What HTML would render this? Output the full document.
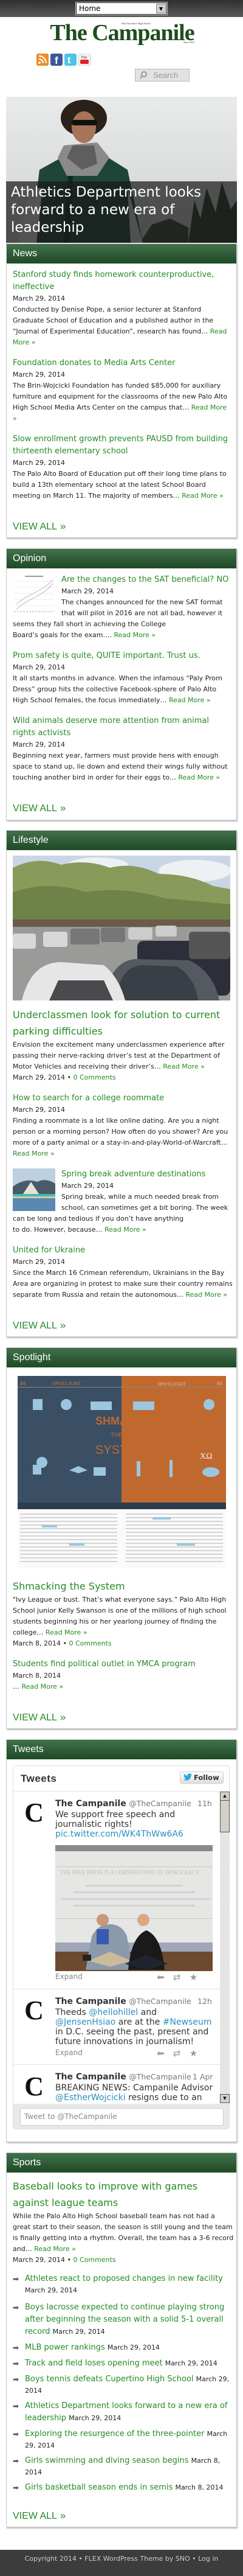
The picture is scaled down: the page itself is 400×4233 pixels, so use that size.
<!DOCTYPE html>
<html><head><meta charset="utf-8">
<style>
*{margin:0;padding:0;box-sizing:border-box}
body{width:400px;height:4233px;position:relative;background:#fff;font-family:"DejaVu Sans",sans-serif;overflow:hidden}
.abs{position:absolute}
.a{position:absolute;left:21px;white-space:nowrap;font-family:"DejaVu Sans",sans-serif}
.t{font-size:13px;line-height:20px;color:#268a26}
.bt{font-size:16px;line-height:27px;color:#268a26}
.l{font-size:11px;line-height:18px;color:#222}
.g{color:#268a26}
.box{position:absolute;left:10px;width:380px;border:1px solid #c8c8c8;background:#fff;box-shadow:1px 2px 2px rgba(0,0,0,.25)}
.hd{position:absolute;left:0;top:0;width:378px;height:32px;background:linear-gradient(#42714b,#1e4a26);color:#fff;font:16px/32px "Liberation Sans",sans-serif;padding-left:10px}
.va{position:absolute;left:21px;font:16px/24px "Liberation Sans",sans-serif;color:#268a26;white-space:nowrap}
.va b{font-weight:normal;font-size:17px;margin-left:5px}
.thumb{float:left;width:70px;height:70px;margin-right:10px}
.ar{position:absolute;left:21px;width:13px;height:20px;color:#555;font-size:12px;line-height:20px}
.li{position:absolute;left:41px;white-space:nowrap}
.li .t{display:block}
.li .l{display:block}
.dt{font-size:11px;color:#222}
.tw{font-family:"DejaVu Sans",sans-serif;white-space:nowrap;position:absolute;left:91px}
.tn{font-size:14px;line-height:20px;color:#333}
.tn b{font-weight:bold}
.tn span{font-size:12.5px;color:#777;font-weight:normal}
.tt{font-size:14px;line-height:16px;color:#333}
.tt a,.lk{color:#2a8fbd}
.ex{font-size:12px;color:#888}
.av{position:absolute;left:36px;width:40px;height:47px;font:bold 44px/47px "Liberation Serif",serif;color:#111;text-align:center}
</style></head><body>

<div class="abs" style="left:0;top:0;width:400px;height:28px;background:linear-gradient(#2f2f2f,#5a5a5a)"></div>
<div class="abs" style="left:125px;top:4px;width:150px;height:20px;background:#fff;border:1px solid #222;outline:1px solid #ccc"></div>
<div class="abs" style="left:130px;top:5px;font:12px/18px 'DejaVu Sans',sans-serif;color:#000">Home</div>
<div class="abs" style="left:257px;top:6px;width:16px;height:16px;background:#d4d0c8;border:1px solid #888;font-size:8px;line-height:16px;text-align:center">▼</div>

<div class="abs" style="left:80px;top:28px;width:242px;text-align:center;font:bold 38px/52px 'Liberation Serif',serif;color:#1e4d1e;white-space:nowrap;letter-spacing:-1px">The Campanile</div>
<div class="abs" style="left:200px;top:36px;font:4px/6px 'Liberation Serif',serif;color:#333;white-space:nowrap">Palo Alto Senior High School</div>
<div class="abs" style="left:302px;top:67px;font:4px/6px 'Liberation Serif',serif;color:#333">Since 1918</div>

<svg class="abs" style="left:60px;top:88px" width="90" height="20" viewBox="0 0 90 20">
<rect x="0" y="0" width="20" height="20" rx="3" fill="#f08a24"/><circle cx="5" cy="15" r="2" fill="#fff"/><path d="M4 9a7 7 0 0 1 7 7M4 4a12 12 0 0 1 12 12" stroke="#fff" stroke-width="2.2" fill="none"/>
<rect x="23" y="0" width="20" height="20" rx="3" fill="#3b5998"/><text x="30" y="17" font-family="Liberation Sans" font-weight="bold" font-size="17" fill="#fff">f</text>
<rect x="46" y="0" width="20" height="20" rx="3" fill="#4fc3e8"/><text x="51" y="16" font-family="Liberation Sans" font-weight="bold" font-size="16" fill="#fff">t</text>
<rect x="69" y="0" width="20" height="20" rx="3" fill="#f4f4f4" stroke="#ccc"/><text x="73" y="8" font-family="Liberation Sans" font-size="6" fill="#333">You</text><rect x="72" y="10" width="14" height="7" rx="2" fill="#d22"/>
</svg>

<div class="abs" style="left:222px;top:113px;width:90px;height:21px;background:#e2e2e2;border:1px solid #bbb"></div>
<svg class="abs" style="left:230px;top:117px" width="12" height="13"><circle cx="7" cy="5" r="4" stroke="#999" stroke-width="2" fill="none"/><path d="M4 8l-3 4" stroke="#999" stroke-width="2"/></svg>
<div class="abs" style="left:252px;top:114px;font:13px/19px 'Liberation Sans',sans-serif;color:#999">Search</div>

<svg class="abs" style="left:10px;top:159px" width="380" height="240" viewBox="0 0 380 240">
<defs><linearGradient id="sky" x1="0" y1="0" x2="0" y2="1"><stop offset="0" stop-color="#e9ebea"/><stop offset="1" stop-color="#cfd2d1"/></linearGradient></defs>
<rect width="380" height="240" fill="url(#sky)"/>
<path d="M300 240 L310 170 L320 200 L330 150 L345 190 L355 140 L370 185 L380 170 L380 240Z" fill="#2a3a2a"/>
<path d="M220 240 L240 210 L270 200 L300 215 L300 240Z" fill="#3a4a38"/>
<path d="M40 240 L55 120 L100 95 L130 85 L160 95 L200 120 L225 240Z" fill="#1f4536"/>
<path d="M85 100 L95 80 L150 75 L170 100 L150 130 L100 130Z" fill="#8a8a8a"/>
<path d="M100 100 L110 80 L145 80 L150 110 L125 120Z" fill="#5e5e5e"/>
<path d="M95 240 L102 130 L110 130 L105 240Z" fill="#112a20"/>
<ellipse cx="128" cy="35" rx="38" ry="30" fill="#2c2118"/>
<ellipse cx="128" cy="50" rx="20" ry="26" fill="#a87458"/>
<rect x="108" y="38" width="42" height="9" rx="4" fill="#111"/>
<path d="M40 150 L20 240 L50 240 L60 150Z" fill="#e8e8e8"/>
<path d="M200 150 L225 240 L205 240Z" fill="#dddddd"/>
</svg>
<div class="abs" style="left:10px;top:298px;width:380px;height:101px;background:rgba(25,25,25,.72)"></div>
<div class="abs" style="left:18px;top:302px;font:23px/29px 'DejaVu Sans',sans-serif;color:#fff;white-space:nowrap">Athletics Department looks<br>forward to a new era of<br>leadership</div>

<div class="box" style="top:400px;height:484px"><div class="hd">News</div></div>
<div class="a" style="top:442px"><div class="t">Stanford study finds homework counterproductive,</div><div class="t">ineffective</div><div class="l">March 29, 2014</div><div class="l">Conducted by Denise Pope, a senior lecturer at Stanford</div><div class="l">Graduate School of Education and a published author in the</div><div class="l">“Journal of Experimental Education”, research has found…  <span class="g">Read</span></div><div class="l g">More »</div></div>
<div class="a" style="top:587px"><div class="t">Foundation donates to Media Arts Center</div><div class="l">March 29, 2014</div><div class="l">The Brin-Wojcicki Foundation has funded $85,000 for auxiliary</div><div class="l">furniture and equipment for the classrooms of the new Palo Alto</div><div class="l">High School Media Arts Center on the campus that…  <span class="g">Read More</span></div><div class="l g">»</div></div>
<div class="a" style="top:712px"><div class="t">Slow enrollment growth prevents PAUSD from building</div><div class="t">thirteenth elementary school</div><div class="l">March 29, 2014</div><div class="l">The Palo Alto Board of Education put off their long time plans to</div><div class="l">build a 13th elementary school at the latest School Board</div><div class="l">meeting on March 11. The majority of members…  <span class="g">Read More »</span></div></div>
<div class="va" style="top:853px">VIEW ALL<b>»</b></div>

<div class="box" style="top:901px;height:447px"><div class="hd">Opinion</div></div>
<div class="a" style="top:943px;width:360px">
<svg class="thumb" style="margin-top:2px" viewBox="0 0 70 70"><rect width="70" height="70" fill="#fff"/><g stroke="#ddd" stroke-width=".5"><path d="M2 10H68M2 20H68M2 30H68M2 40H68M2 50H68"/></g><path d="M6 48 C25 30 45 30 66 8" stroke="#bbb" fill="none"/><path d="M6 56 C25 38 45 38 66 14" stroke="#bbb" fill="none"/><path d="M2 60H68" stroke="#aaa" stroke-dasharray="3 2"/><rect x="20" y="1" width="30" height="2" fill="#999"/></svg>
<div class="t">Are the changes to the SAT beneficial? NO</div><div class="l">March 29, 2014</div><div class="l">The changes announced for the new SAT format</div><div class="l">that will pilot in 2016 are not all bad, however it</div><div class="l">seems they fall short in achieving the College</div><div class="l" style="clear:both">Board’s goals for the exam….  <span class="g">Read More »</span></div></div>
<div class="a" style="top:1068px"><div class="t">Prom safety is quite, QUITE important. Trust us.</div><div class="l">March 29, 2014</div><div class="l">It all starts months in advance. When the infamous “Paly Prom</div><div class="l">Dress” group hits the collective Facebook-sphere of Palo Alto</div><div class="l">High School females, the focus immediately…  <span class="g">Read More »</span></div></div>
<div class="a" style="top:1175px"><div class="t">Wild animals deserve more attention from animal</div><div class="t">rights activists</div><div class="l">March 29, 2014</div><div class="l">Beginning next year, farmers must provide hens with enough</div><div class="l">space to stand up, lie down and extend their wings fully without</div><div class="l">touching another bird in order for their eggs to…  <span class="g">Read More »</span></div></div>
<div class="va" style="top:1316px">VIEW ALL<b>»</b></div>

<div class="box" style="top:1364px;height:833px"><div class="hd">Lifestyle</div></div>
<svg class="abs" style="left:21px;top:1406px" width="358" height="238" viewBox="0 0 358 238">
<rect width="358" height="238" fill="#9a9a98"/>
<rect width="358" height="60" fill="#c9d6e6"/>
<ellipse cx="300" cy="25" rx="60" ry="18" fill="#eef1f4"/>
<ellipse cx="140" cy="15" rx="50" ry="12" fill="#eef1f4"/>
<path d="M0 110 L0 20 Q40 0 80 15 Q120 5 160 20 Q200 10 240 30 Q290 30 330 50 L358 55 L358 110Z" fill="#8a9a5a"/>
<path d="M0 60 Q60 40 120 60 Q180 50 250 70 L358 80 L358 115 L0 115Z" fill="#6f8248"/>
<rect y="105" width="358" height="12" fill="#6a5a4a"/>
<g fill="#d8d8d8"><rect x="0" y="128" width="38" height="25" rx="4"/><rect x="50" y="125" width="40" height="25" rx="4"/></g>
<g fill="#777"><rect x="95" y="120" width="48" height="26" rx="4"/><rect x="145" y="118" width="40" height="24" rx="4"/></g>
<g fill="#ccc"><rect x="190" y="118" width="40" height="20" rx="4"/><rect x="235" y="115" width="35" height="18" rx="4"/></g>
<rect x="205" y="140" width="153" height="90" rx="10" fill="#2c2f3a"/>
<rect x="290" y="125" width="68" height="45" rx="6" fill="#555"/>
<path d="M150 238 Q160 175 200 170 L290 172 Q330 190 340 238Z" fill="#555a60"/>
<path d="M170 238 Q175 185 210 180 L270 182 Q300 200 305 238Z" fill="#3a3e46"/>
<path d="M15 238 Q30 175 80 175 L150 180 Q175 200 185 238Z" fill="#e6e6e6"/>
<path d="M60 238 L75 205 L150 205 L165 238Z" fill="#4a4a4e"/>
</svg>
<div class="a" style="top:1654px"><div class="bt">Underclassmen look for solution to current</div><div class="bt">parking difficulties</div><div class="l">Envision the excitement many underclassmen experience after</div><div class="l">passing their nerve-racking driver’s test at the Department of</div><div class="l">Motor Vehicles and receiving their driver’s…  <span class="g">Read More »</span></div><div class="l">March 29, 2014 • <span class="g">0 Comments</span></div></div>
<div class="a" style="top:1795px"><div class="t">How to search for a college roommate</div><div class="l">March 29, 2014</div><div class="l">Finding a roommate is a lot like online dating. Are you a night</div><div class="l">person or a morning person? How often do you shower? Are you</div><div class="l">more of a party animal or a stay-in-and-play-World-of-Warcraft…</div><div class="l g">Read More »</div></div>
<div class="a" style="top:1920px;width:360px">
<svg class="thumb" viewBox="0 0 70 70"><rect width="70" height="70" fill="#bcd0e0"/><path d="M0 30 Q20 15 40 22 Q55 15 70 25 L70 45 L0 45Z" fill="#4a5a6a"/><path d="M15 45 L30 22 L45 45Z" fill="#e8e0d8"/><rect y="42" width="70" height="6" fill="#3cc0b0"/><rect y="48" width="70" height="22" fill="#5a88b0"/><rect y="46" width="70" height="3" fill="#d8c8a8"/></svg>
<div class="t">Spring break adventure destinations</div><div class="l">March 29, 2014</div><div class="l">Spring break, while a much needed break from</div><div class="l">school, can sometimes get a bit boring. The week</div><div class="l">can be long and tedious if you don’t have anything</div><div class="l" style="clear:both">to do. However, because…  <span class="g">Read More »</span></div></div>
<div class="a" style="top:2045px"><div class="t">United for Ukraine</div><div class="l">March 29, 2014</div><div class="l">Since the March 16 Crimean referendum, Ukrainians in the Bay</div><div class="l">Area are organizing in protest to make sure their country remains</div><div class="l">separate from Russia and retain the autonomous…  <span class="g">Read More »</span></div></div>
<div class="va" style="top:2166px">VIEW ALL<b>»</b></div>

<div class="box" style="top:2214px;height:627px"><div class="hd">Spotlight</div></div>
<svg class="abs" style="left:29px;top:2261px" width="343" height="316" viewBox="0 0 343 316">
<rect width="171" height="219" fill="#3a4f63"/><rect x="171" width="172" height="219" fill="#c0692f"/>
<rect y="18" width="343" height="1" fill="#888"/>
<text x="4" y="15" font-family="Liberation Serif" font-weight="bold" font-size="8" fill="#c0692f">B4</text>
<text x="57" y="15" font-family="Liberation Serif" font-weight="bold" font-size="8" fill="#c0692f">SPOTLIGHT</text>
<text x="230" y="16" font-family="Liberation Serif" font-weight="bold" font-size="8" fill="#e8a070">SPOTLIGHT</text>
<text x="328" y="15" font-family="Liberation Serif" font-weight="bold" font-size="8" fill="#e8a070">B5</text>
<g fill="#9cc6df"><rect x="25" y="38" width="16" height="18"/><circle cx="80" cy="47" r="9"/><rect x="120" y="42" width="35" height="14"/><rect x="190" y="42" width="35" height="14"/><circle cx="315" cy="47" r="9"/><circle cx="40" cy="142" r="9"/><rect x="125" y="150" width="20" height="14"/><path d="M85 155 L100 148 L115 155 L100 160Z"/><rect x="25" y="146" width="14" height="16"/><rect x="196" y="140" width="6" height="25"/><rect x="250" y="138" width="5" height="28"/><ellipse cx="318" cy="158" rx="14" ry="8"/></g>
<text x="128" y="80" font-family="Liberation Sans" font-weight="bold" font-size="18" fill="#c0692f">SHMACKING</text>
<text x="153" y="100" font-family="Liberation Sans" font-size="10" fill="#c0692f">THE</text>
<text x="128" y="128" font-family="Liberation Sans" font-size="20" fill="#c0692f">SYSTEM</text>
<text x="300" y="136" font-family="Liberation Serif" font-size="14" fill="#eee">XΩ</text>
<rect y="208" width="343" height="11" fill="#2d3d4d"/>
<rect y="219" width="343" height="97" fill="#fafafa"/>
<g fill="#d4d4d4"><rect x="4" y="226" width="160" height="2"/><rect x="4" y="232" width="160" height="2"/><rect x="4" y="238" width="160" height="2"/><rect x="4" y="244" width="160" height="2"/><rect x="4" y="250" width="160" height="2"/><rect x="4" y="256" width="160" height="2"/><rect x="4" y="262" width="160" height="2"/><rect x="4" y="268" width="160" height="2"/><rect x="4" y="274" width="160" height="2"/><rect x="4" y="280" width="160" height="2"/><rect x="4" y="286" width="160" height="2"/><rect x="4" y="292" width="160" height="2"/><rect x="4" y="298" width="160" height="2"/><rect x="4" y="304" width="160" height="2"/>
<rect x="178" y="226" width="160" height="2"/><rect x="178" y="232" width="160" height="2"/><rect x="178" y="238" width="160" height="2"/><rect x="178" y="244" width="160" height="2"/><rect x="178" y="250" width="160" height="2"/><rect x="178" y="256" width="160" height="2"/><rect x="178" y="262" width="160" height="2"/><rect x="178" y="268" width="160" height="2"/><rect x="178" y="274" width="160" height="2"/><rect x="178" y="280" width="160" height="2"/><rect x="178" y="286" width="160" height="2"/><rect x="178" y="292" width="160" height="2"/><rect x="178" y="298" width="160" height="2"/><rect x="178" y="304" width="160" height="2"/></g>
<g fill="#9cc6df"><rect x="40" y="245" width="25" height="4"/><rect x="85" y="275" width="25" height="4"/><rect x="222" y="232" width="30" height="4"/><rect x="262" y="275" width="30" height="4"/></g>
</svg>
<div class="a" style="top:2593px"><div class="bt">Shmacking the System</div><div class="l">"Ivy League or bust. That’s what everyone says.” Palo Alto High</div><div class="l">School junior Kelly Swanson is one of the millions of high school</div><div class="l">students beginning his or her yearlong journey of finding the</div><div class="l">college…  <span class="g">Read More »</span></div><div class="l">March 8, 2014 • <span class="g">0 Comments</span></div></div>
<div class="a" style="top:2725px"><div class="t">Students find political outlet in YMCA program</div><div class="l">March 8, 2014</div><div class="l">…  <span class="g">Read More »</span></div></div>
<div class="va" style="top:2810px">VIEW ALL<b>»</b></div>

<div class="box" style="top:2858px;height:662px"><div class="hd">Tweets</div></div>
<div class="abs" style="left:21px;top:2901px;width:357px;height:598px;border:1px solid #ddd;border-radius:4px;background:#fff"></div>
<div class="abs" style="left:34px;top:2911px;font:bold 17px/24px 'Liberation Sans',sans-serif;color:#333;letter-spacing:.5px">Tweets</div>
<div class="abs" style="left:296px;top:2911px;width:72px;height:20px;border:1px solid #ccc;border-radius:3px;background:linear-gradient(#fff,#dedede)"></div>
<svg class="abs" style="left:302px;top:2914px" width="14" height="12" viewBox="0 0 24 20"><path d="M24 2.4c-.9.4-1.800.7-2.8.8 1-.6 1.8-1.6 2.2-2.7-1 .6-2 1-3.1 1.2C19.3.7 18 0 16.6 0c-2.7 0-4.9 2.2-4.9 4.9 0 .4 0 .8.1 1.1C7.7 5.8 4.1 3.9 1.7.9c-.4.7-.7 1.6-.7 2.5 0 1.7.9 3.2 2.2 4.1-.8 0-1.6-.2-2.2-.6v.1c0 2.4 1.7 4.4 3.9 4.8-.4.1-.8.2-1.3.2-.3 0-.6 0-.9-.1.6 2 2.4 3.4 4.6 3.4-1.7 1.3-3.800 2.100-6.100 2.100-.4 0-.8 0-1.200-.1C2.200 18.800 4.800 20 7.500 20c9.100 0 14-7.500 14-14v-.6c1-.7 1.800-1.600 2.500-2.600z" fill="#2aa9e0"/></svg>
<div class="abs" style="left:319px;top:2913px;font:bold 11.5px/16px 'DejaVu Sans',sans-serif;color:#333">Follow</div>
<div class="abs" style="left:22px;top:2943px;width:340px;height:1px;background:#e4e4e4"></div>
<div class="abs" style="left:362px;top:2944px;width:16px;height:512px;background:repeating-conic-gradient(#d8d8d8 0 25%,#f2f2f2 0 50%) 0 0/2px 2px"></div>
<div class="abs" style="left:362px;top:2944px;width:16px;height:15px;background:#d4d0c8;border:1px solid #555;font-size:7px;line-height:13px;text-align:center">▲</div>
<div class="abs" style="left:362px;top:2959px;width:16px;height:52px;background:#d4d0c8;border:1px solid #555;border-top:none"></div>
<div class="abs" style="left:362px;top:3441px;width:16px;height:15px;background:#d4d0c8;border:1px solid #555;font-size:7px;line-height:13px;text-align:center">▼</div>

<div class="av" style="top:2955px">C</div>
<div class="tw tn" style="top:2954px"><b>The Campanile</b> <span>@TheCampanile</span></div>
<div class="tw tn" style="top:2954px;left:325px"><span>11h</span></div>
<div class="tw tt" style="top:2974px">We support free speech and<br>journalistic rights!<br><a>pic.twitter.com/WK4ThWw6A6</a></div>
<svg class="abs" style="left:91px;top:3032px" width="259" height="207" viewBox="0 0 259 207">
<rect width="259" height="207" fill="#e6e6e4"/><rect width="259" height="10" fill="#8a8a88"/>
<rect x="0" y="35" width="259" height="1" fill="#c8c8c8"/><rect x="0" y="120" width="259" height="1" fill="#c8c8c8"/>
<text x="8" y="48" font-family="Liberation Serif" font-size="9" fill="#bbb">THE FREE PRESS IS A CORNERSTONE OF DEMOCRACY</text>
<g fill="#d2d2d2"><rect x="50" y="65" width="160" height="3"/><rect x="30" y="76" width="200" height="3"/><rect x="10" y="87" width="245" height="3"/><rect x="30" y="98" width="200" height="3"/></g>
<rect y="160" width="259" height="15" fill="#9fa6b8"/>
<rect y="175" width="259" height="32" fill="#6b4a30"/>
<path d="M50 205 L60 150 Q70 130 90 130 Q110 130 118 150 L128 205Z" fill="#8a9aab"/>
<circle cx="78" cy="123" r="10" fill="#c89878"/>
<rect x="68" y="138" width="20" height="25" fill="#3a5ab0"/>
<path d="M55 190 L90 175 L125 190 L90 200Z" fill="#cbbb9b"/>
<path d="M120 205 Q125 150 150 140 Q175 150 180 205Z" fill="#1a1a1a"/>
<circle cx="145" cy="123" r="10" fill="#d8a888"/>
<path d="M115 195 L150 180 L185 195 L150 205Z" fill="#1e2430"/>
<rect x="45" y="180" width="14" height="10" fill="#222"/>
</svg>
<div class="tw ex" style="top:3241px">Expand</div>
<div class="abs" style="left:258px;top:3240px;font-size:15px;color:#999">⬅&nbsp;&nbsp;&nbsp;⇄&nbsp;&nbsp;&nbsp;★</div>
<div class="abs" style="left:22px;top:3268px;width:340px;height:1px;background:#e4e4e4"></div>

<div class="av" style="top:3280px">C</div>
<div class="tw tn" style="top:3279px"><b>The Campanile</b> <span>@TheCampanile</span></div>
<div class="tw tn" style="top:3279px;left:325px"><span>12h</span></div>
<div class="tw tt" style="top:3299px">Theeds <a>@hellohillel</a> and<br><a>@JensenHsiao</a> are at the <a>#Newseum</a><br>in D.C. seeing the past, present and<br>future innovations in journalism!</div>
<div class="tw ex" style="top:3366px">Expand</div>
<div class="abs" style="left:258px;top:3365px;font-size:15px;color:#999">⬅&nbsp;&nbsp;&nbsp;⇄&nbsp;&nbsp;&nbsp;★</div>
<div class="abs" style="left:22px;top:3392px;width:340px;height:1px;background:#e4e4e4"></div>

<div class="abs" style="left:22px;top:3393px;width:340px;height:63px;overflow:hidden">
<div class="av" style="top:12px;left:14px">C</div>
<div class="tw tn" style="top:10px;left:69px"><b>The Campanile</b> <span>@TheCampanile</span></div>
<div class="tw tn" style="top:10px;left:295px"><span>1 Apr</span></div>
<div class="tw tt" style="top:30px;left:69px">BREAKING NEWS: Campanile Advisor<br><a>@EstherWojcicki</a> resigns due to an</div>
</div>
<div class="abs" style="left:22px;top:3457px;width:355px;height:41px;background:#e8e8e8;border-radius:0 0 4px 4px"></div>
<div class="abs" style="left:33px;top:3464px;width:335px;height:29px;background:#fff;border:1px solid #ccc;border-radius:3px;font:12px/27px 'DejaVu Sans',sans-serif;color:#888;padding-left:6px">Tweet to @TheCampanile</div>

<div class="box" style="top:3537px;height:616px"><div class="hd">Sports</div></div>
<div class="a" style="top:3579px"><div class="bt">Baseball looks to improve with games</div><div class="bt">against league teams</div><div class="l">While the Palo Alto High School baseball team has not had a</div><div class="l">great start to their season, the season is still young and the team</div><div class="l">is finally getting into a rhythm. Overall, the team has a 3-6 record</div><div class="l">and…  <span class="g">Read More »</span></div><div class="l">March 29, 2014 • <span class="g">0 Comments</span></div></div>

<div class="ar" style="top:3735px">➡</div><div class="li" style="top:3735px"><span class="t">Athletes react to proposed changes in new facility</span><span class="l">March 29, 2014</span></div>
<div class="ar" style="top:3782px">➡</div><div class="li" style="top:3782px"><span class="t">Boys lacrosse expected to continue playing strong</span><span class="t">after beginning the season with a solid 5-1 overall</span><span class="t">record <span class="dt">March 29, 2014</span></span></div>
<div class="ar" style="top:3848px">➡</div><div class="li" style="top:3848px"><span class="t">MLB power rankings <span class="dt">March 29, 2014</span></span></div>
<div class="ar" style="top:3874px">➡</div><div class="li" style="top:3874px"><span class="t">Track and field loses opening meet <span class="dt">March 29, 2014</span></span></div>
<div class="ar" style="top:3900px">➡</div><div class="li" style="top:3900px"><span class="t">Boys tennis defeats Cupertino High School <span class="dt">March 29,</span></span><span class="l">2014</span></div>
<div class="ar" style="top:3944px">➡</div><div class="li" style="top:3944px"><span class="t">Athletics Department looks forward to a new era of</span><span class="t">leadership <span class="dt">March 29, 2014</span></span></div>
<div class="ar" style="top:3990px">➡</div><div class="li" style="top:3990px"><span class="t">Exploring the resurgence of the three-pointer <span class="dt">March</span></span><span class="l">29, 2014</span></div>
<div class="ar" style="top:4034px">➡</div><div class="li" style="top:4034px"><span class="t">Girls swimming and diving season begins <span class="dt">March 8,</span></span><span class="l">2014</span></div>
<div class="ar" style="top:4078px">➡</div><div class="li" style="top:4078px"><span class="t">Girls basketball season ends in semis <span class="dt">March 8, 2014</span></span></div>
<div class="va" style="top:4122px">VIEW ALL<b>»</b></div>

<div class="abs" style="left:0;top:4190px;width:400px;height:43px;background:#3c3c3c;color:#ccc;font:11px/30px 'DejaVu Sans',sans-serif;text-align:center;white-space:nowrap">Copyright 2014 • FLEX WordPress Theme by SNO • Log in</div>

</body></html>
